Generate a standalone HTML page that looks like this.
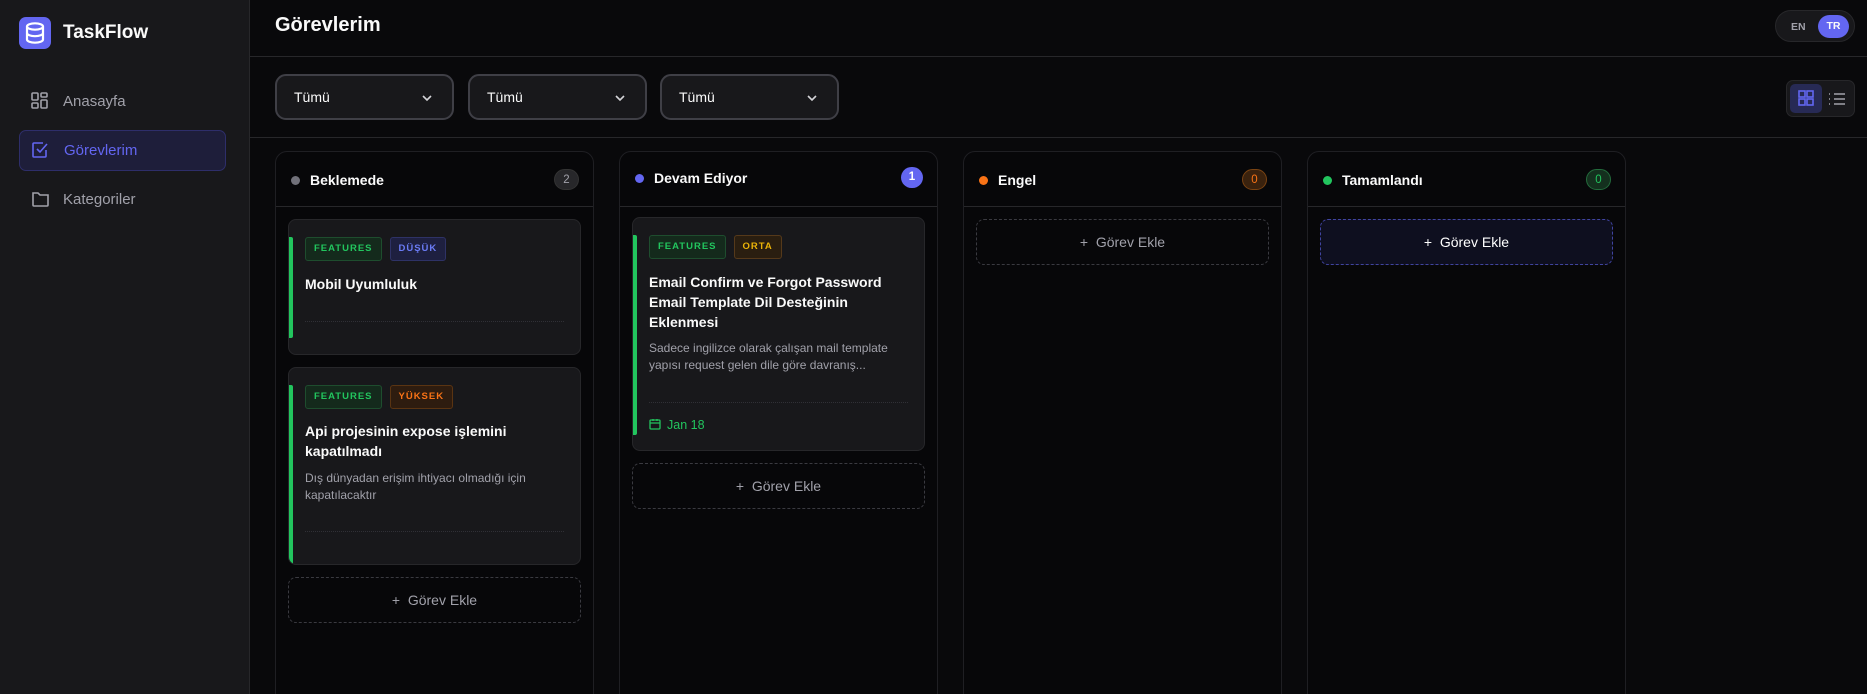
<!DOCTYPE html>
<html><head><meta charset="utf-8"><style>
*{box-sizing:border-box;margin:0;padding:0}
html,body{width:1867px;height:694px;overflow:hidden}
body{background:#09090b;font-family:"Liberation Sans",sans-serif;color:#fafafa;position:relative}
.sb{position:absolute;left:0;top:0;width:250px;height:694px;background:#18181b;border-right:1px solid #27272a}
.logo{position:absolute;left:19px;top:17px;width:32px;height:32px;border-radius:7px;background:#6366f1}
.brand{position:absolute;left:63px;top:22px;font-size:19px;font-weight:bold}
.nav{position:absolute;left:19px;width:207px;height:41px;border-radius:7px;font-size:15px;color:#a1a1aa;padding-left:44px;line-height:41px}
.nav svg{position:absolute;left:12px;top:11px}
.nav.act{background:#1e1e3a;border:1px solid #2e2e6a;color:#6366f1;line-height:39px}
.hdr{position:absolute;left:250px;top:0;right:0;height:57px;border-bottom:1px solid #27272a}
.ttl{position:absolute;left:275px;top:14px;font-size:20px;font-weight:bold}
.lang{position:absolute;left:1775px;top:10px;width:80px;height:32px;border-radius:16px;background:#18181b;border:1px solid #27272a}
.lang .en{position:absolute;left:15px;top:10px;font-size:10.5px;font-weight:bold;color:#a1a1aa}
.lang .tr{position:absolute;left:42px;top:4px;width:31px;height:23px;border-radius:12px;background:#6366f1;font-size:10.5px;font-weight:bold;text-align:center;line-height:23px}
.fb{position:absolute;left:250px;top:57px;right:0;height:81px;border-bottom:1px solid #27272a}
.sel{position:absolute;top:74px;width:179px;height:46px;border:2px solid #3f3f46;border-radius:11px;background:#18181b;font-size:14px;padding-left:17px;line-height:42px}
.sel svg{position:absolute;right:18px;top:15px}
.vt{position:absolute;left:1786px;top:80px;width:69px;height:37px;border-radius:7px;background:#18181b;border:1px solid #27272a}
.vt .on{position:absolute;left:3px;top:3px;width:32px;height:29px;border-radius:5px;background:#272a55}
.col{position:absolute;top:151px;width:319px;height:560px;border:1px solid #1f1f23;border-radius:12px;background:#070709}
.ch{height:55px;border-bottom:1px solid #27272a;position:relative}
.ch .dot{position:absolute;left:15px;top:24px;width:9px;height:9px;border-radius:50%}
.ch .nm{position:absolute;left:34px;top:20px;font-size:14px;font-weight:bold}
.ch .cnt{position:absolute;right:14px;top:17px;width:25px;height:21px;border-radius:11px;font-size:11.5px;text-align:center;line-height:20px}
.card{position:absolute;left:12px;width:293px;background:#18181b;border:1px solid #27272a;border-radius:8px;overflow:hidden}
.card .bar{position:absolute;left:0;top:17px;width:4px;background:#22c55e;border-radius:0 2px 2px 0}
.tags{position:absolute;left:16px;top:17px;display:flex;gap:8px}
.tag{height:24px;padding:0 8px;font-size:9.5px;font-weight:bold;letter-spacing:1px;line-height:22px;border-radius:3px;border:1px solid}
.tf{color:#22c55e;background:#142a1c;border-color:#1e4d2e}
.ct{position:absolute;left:16px;right:16px;font-size:14px;font-weight:bold;line-height:20px}
.cd{position:absolute;left:16px;right:16px;font-size:12px;color:#a1a1aa;line-height:17px}
.dv{position:absolute;left:16px;right:16px;height:0;border-top:1px dotted #303036}
.add{position:absolute;left:12px;width:293px;height:46px;border:1px dashed #3a3a40;border-radius:8px;text-align:center;line-height:44px;font-size:14px;color:#a1a1aa}
</style></head><body>
<div class="sb">
 <div class="logo"><svg width="32" height="32" viewBox="0 0 32 32" fill="none" stroke="#fff" stroke-width="2.2"><ellipse cx="16" cy="9.5" rx="8" ry="3.2"/><path d="M8 9.5v13c0 1.8 3.6 3.2 8 3.2s8-1.4 8-3.2v-13M8 16c0 1.8 3.6 3.2 8 3.2s8-1.4 8-3.2"/></svg></div>
 <div class="brand">TaskFlow</div>
 <div class="nav" style="top:81px"><svg width="18" height="18" viewBox="0 0 18 18" fill="none" stroke="#a1a1aa" stroke-width="1.6"><rect x="1" y="1" width="6" height="7" rx="1"/><rect x="10" y="1" width="6" height="4" rx="1"/><rect x="1" y="11" width="6" height="5" rx="1"/><rect x="10" y="8" width="6" height="8" rx="1"/></svg>Anasayfa</div>
 <div class="nav act" style="top:130px"><svg width="18" height="18" viewBox="0 0 18 18" fill="none" stroke="#6366f1" stroke-width="1.6" style="top:10px;left:11px"><path d="M15 9v6a1 1 0 0 1-1 1H3a1 1 0 0 1-1-1V3a1 1 0 0 1 1-1h9"/><path d="M6 8l3 3 7-8"/></svg>Görevlerim</div>
 <div class="nav" style="top:179px"><svg width="19" height="18" viewBox="0 0 19 18" fill="none" stroke="#a1a1aa" stroke-width="1.6"><path d="M2 3h5l2 2h8v10a1 1 0 0 1-1 1H3a1 1 0 0 1-1-1z"/></svg>Kategoriler</div>
</div>
<div class="hdr"></div>
<div class="ttl">Görevlerim</div>
<div class="lang"><span class="en">EN</span><span class="tr">TR</span></div>
<div class="fb"></div>
<div class="sel" style="left:275px">Tümü<svg width="14" height="14" viewBox="0 0 14 14" fill="none" stroke="#d4d4d8" stroke-width="1.6"><path d="M3 5l4 4 4-4"/></svg></div>
<div class="sel" style="left:468px">Tümü<svg width="14" height="14" viewBox="0 0 14 14" fill="none" stroke="#d4d4d8" stroke-width="1.6"><path d="M3 5l4 4 4-4"/></svg></div>
<div class="sel" style="left:660px">Tümü<svg width="14" height="14" viewBox="0 0 14 14" fill="none" stroke="#d4d4d8" stroke-width="1.6"><path d="M3 5l4 4 4-4"/></svg></div>
<div class="vt"><div class="on"><svg width="32" height="29" viewBox="0 0 32 29" fill="none" stroke="#6366f1" stroke-width="1.6"><rect x="9" y="7" width="6" height="6"/><rect x="17" y="7" width="6" height="6"/><rect x="9" y="15" width="6" height="6"/><rect x="17" y="15" width="6" height="6"/></svg></div><svg style="position:absolute;left:40px;top:8px" width="20" height="20" viewBox="0 0 20 20" fill="none" stroke="#a1a1aa" stroke-width="1.6"><path d="M7 5h11M7 10h11M7 15h11M2 5h1M2 10h1M2 15h1"/></svg></div>

<div class="col" style="left:275px">
 <div class="ch"><div class="dot" style="background:#71717a"></div><div class="nm">Beklemede</div><div class="cnt" style="background:#27272a;color:#a1a1aa;border:1px solid #333">2</div></div>
 <div class="card" style="top:67px;height:136px"><div class="bar" style="height:101px"></div>
  <div class="tags"><div class="tag tf">FEATURES</div><div class="tag" style="color:#6b7cf6;background:#1e2040;border-color:#2e3266">DÜŞÜK</div></div>
  <div class="ct" style="top:54px">Mobil Uyumluluk</div><div class="dv" style="top:101px"></div></div>
 <div class="card" style="top:215px;height:198px"><div class="bar" style="height:180px"></div>
  <div class="tags"><div class="tag tf">FEATURES</div><div class="tag" style="color:#f97316;background:#2e1c0f;border-color:#5a3412">YÜKSEK</div></div>
  <div class="ct" style="top:53px">Api projesinin expose işlemini kapatılmadı</div>
  <div class="cd" style="top:102px">Dış dünyadan erişim ihtiyacı olmadığı için kapatılacaktır</div><div class="dv" style="top:163px"></div></div>
 <div class="add" style="top:425px">+&nbsp;&nbsp;Görev Ekle</div>
</div>

<div class="col" style="left:619px">
 <div class="ch"><div class="dot" style="background:#6366f1;top:22px"></div><div class="nm" style="top:18px">Devam Ediyor</div><div class="cnt" style="background:#6366f1;color:#fff;width:22px;top:15px;font-weight:bold">1</div></div>
 <div class="card" style="top:65px;height:234px"><div class="bar" style="height:200px"></div>
  <div class="tags"><div class="tag tf">FEATURES</div><div class="tag" style="color:#eab308;background:#2a1e10;border-color:#55391a">ORTA</div></div>
  <div class="ct" style="top:54px">Email Confirm ve Forgot Password Email Template Dil Desteğinin Eklenmesi</div>
  <div class="cd" style="top:122px">Sadece ingilizce olarak çalışan mail template yapısı request gelen dile göre davranış...</div>
  <div class="dv" style="top:184px"></div>
  <div style="position:absolute;left:16px;top:200px;font-size:12.5px;color:#22c55e"><svg width="12" height="12" viewBox="0 0 12 12" fill="none" stroke="#22c55e" stroke-width="1.3" style="vertical-align:-1px;margin-right:6px"><rect x="1" y="2" width="10" height="9" rx="1"/><path d="M1 5h10M4 1v2M8 1v2"/></svg>Jan 18</div></div>
 <div class="add" style="top:311px">+&nbsp;&nbsp;Görev Ekle</div>
</div>

<div class="col" style="left:963px">
 <div class="ch"><div class="dot" style="background:#f97316"></div><div class="nm">Engel</div><div class="cnt" style="background:#3a220e;color:#f97316;border:1px solid #7a4312">0</div></div>
 <div class="add" style="top:67px;height:46px">+&nbsp;&nbsp;Görev Ekle</div>
</div>

<div class="col" style="left:1307px">
 <div class="ch"><div class="dot" style="background:#22c55e"></div><div class="nm">Tamamlandı</div><div class="cnt" style="background:#14301e;color:#22c55e;border:1px solid #236b3c">0</div></div>
 <div class="add" style="top:67px;background:#0e0f1f;border-color:#4044a0;color:#fff">+&nbsp;&nbsp;Görev Ekle</div>
</div>
</body></html>
